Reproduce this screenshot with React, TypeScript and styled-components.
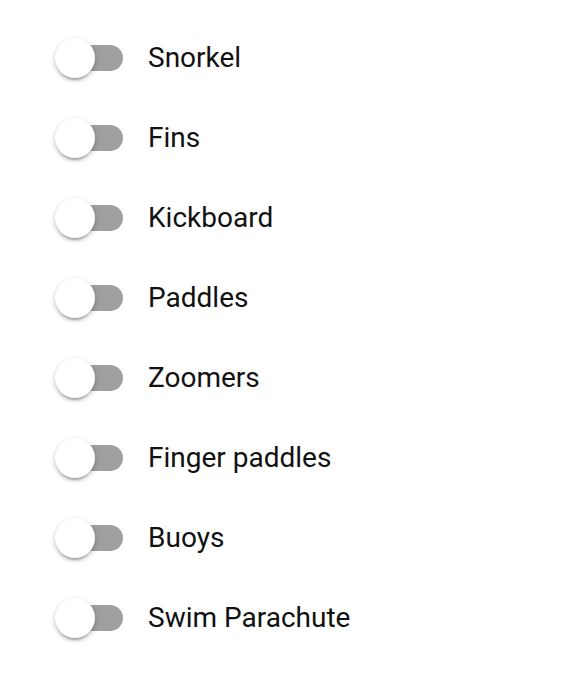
import React, { useState } from 'react';
import styled, { createGlobalStyle } from 'styled-components';

const GlobalStyle = createGlobalStyle`
  body {
    margin: 0;
    background: #ffffff;
    font-family: Roboto, 'Liberation Sans', sans-serif;
  }
`;

const List = styled.div`
  display: flex;
  flex-direction: column;
  padding: 18px 0 0 55px;
`;

const Row = styled.label`
  display: flex;
  align-items: center;
  height: 80px;
  cursor: pointer;
`;

const SwitchRoot = styled.span`
  position: relative;
  display: inline-flex;
  align-items: center;
  width: 68px;
  height: 40px;
  flex-shrink: 0;
`;

const Track = styled.span<{ $on: boolean }>`
  position: absolute;
  left: 6px;
  right: 0;
  top: 7px;
  height: 26px;
  border-radius: 13px;
  background: ${(p) => (p.$on ? '#90caf9' : '#9f9f9f')};
`;

const Thumb = styled.span<{ $on: boolean }>`
  position: absolute;
  top: 0;
  left: ${(p) => (p.$on ? '28px' : '0')};
  width: 40px;
  height: 40px;
  border-radius: 50%;
  background: ${(p) => (p.$on ? '#2196f3' : '#ffffff')};
  box-shadow: 0 4px 2px -2px rgba(0, 0, 0, 0.2), 0 2px 4px 0 rgba(0, 0, 0, 0.14),
    0 2px 6px 0 rgba(0, 0, 0, 0.12);
  transition: left 150ms;
`;

const HiddenInput = styled.input`
  position: absolute;
  opacity: 0;
  width: 100%;
  height: 100%;
  margin: 0;
  cursor: pointer;
`;

const Label = styled.span`
  margin-left: 25px;
  font-size: 28px;
  line-height: 1;
  color: #111111;
`;

const items = [
  'Snorkel',
  'Fins',
  'Kickboard',
  'Paddles',
  'Zoomers',
  'Finger paddles',
  'Buoys',
  'Swim Parachute',
];

export default function App() {
  const [checked, setChecked] = useState<Record<string, boolean>>({});

  return (
    <>
      <GlobalStyle />
      <List>
        {items.map((name) => {
          const on = !!checked[name];
          return (
            <Row key={name}>
              <SwitchRoot>
                <Track $on={on} />
                <Thumb $on={on} />
                <HiddenInput
                  type="checkbox"
                  checked={on}
                  onChange={() => setChecked({ ...checked, [name]: !on })}
                />
              </SwitchRoot>
              <Label>{name}</Label>
            </Row>
          );
        })}
      </List>
    </>
  );
}
